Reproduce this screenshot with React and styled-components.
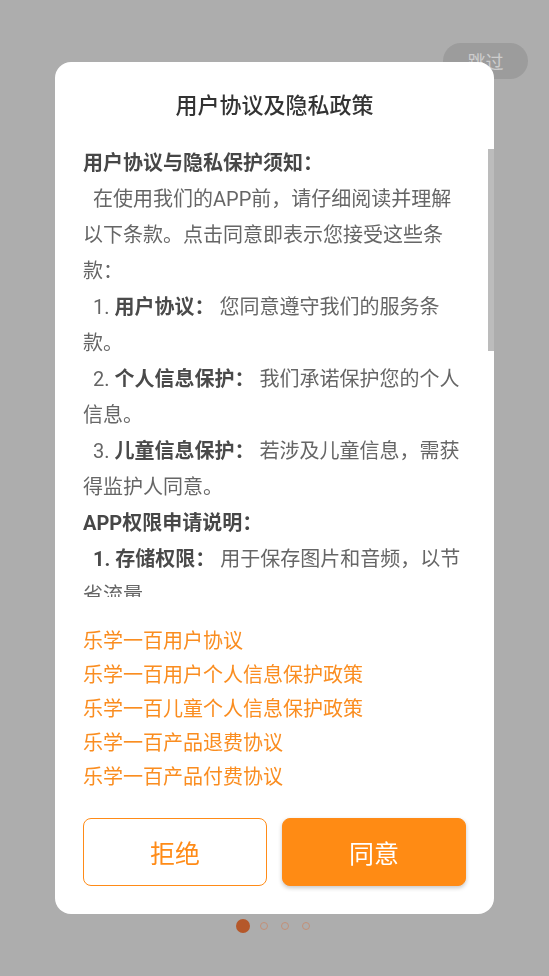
import styled, { createGlobalStyle } from "styled-components";

const GlobalStyle = createGlobalStyle`
	* {
		box-sizing: border-box;
	}

	body {
		margin: 0;
		font-family: Roboto, "Noto Sans CJK SC", sans-serif;
		background-color: #adadad;
	}
`;

const Page = styled.div`
	display: flex;
	flex-direction: column;
	min-height: 100vh;
	background-color: #adadad;
`;

const TopBar = styled.div`
	display: flex;
	justify-content: flex-end;
	padding: 43px 21px 0;
`;

const SkipButton = styled.button`
	width: 85px;
	height: 36px;
	border: none;
	border-radius: 18px;
	background-color: #9c9c9c;
	color: #cdcdcd;
	font-family: inherit;
	font-size: 18px;
`;

const Spacer = styled.div`
	flex: 1;
`;

const Dots = styled.div`
	display: flex;
	justify-content: center;
	gap: 7px;
	padding-bottom: 43px;
`;

const DotSlot = styled.span`
	display: flex;
	align-items: center;
	justify-content: center;
	width: 14px;
	height: 14px;
`;

const Dot = styled.span`
	display: block;
	border-radius: 50%;
	width: ${(props) => (props.$active ? "14px" : "8px")};
	height: ${(props) => (props.$active ? "14px" : "8px")};
	background-color: ${(props) => (props.$active ? "#b5582a" : "transparent")};
	border: ${(props) => (props.$active ? "none" : "1px solid #c39078")};
`;

const Overlay = styled.div`
	position: fixed;
	inset: 0;
	display: flex;
	align-items: center;
	justify-content: center;
`;

const Card = styled.div`
	display: flex;
	flex-direction: column;
	width: 439px;
	border-radius: 16px;
	background-color: #ffffff;
	padding-bottom: 28px;
	overflow: hidden;
`;

const Title = styled.h2`
	margin: 0;
	padding-top: 28px;
	text-align: center;
	font-size: 22px;
	line-height: 32px;
	font-weight: 500;
	color: #333333;
`;

const ScrollWrap = styled.div`
	position: relative;
	margin-top: 23px;
`;

const ScrollBody = styled.div`
	height: 452px;
	overflow-y: auto;
	padding: 0 28px;
	scrollbar-width: none;

	&::-webkit-scrollbar {
		display: none;
	}
`;

const Thumb = styled.span`
	position: absolute;
	top: 4px;
	right: 0;
	width: 6px;
	height: 202px;
	background-color: #bcbcbc;
`;

const Heading = styled.p`
	margin: 0;
	font-size: 20px;
	line-height: 36px;
	font-weight: 700;
	color: #474747;
`;

const Para = styled.p`
	margin: 0;
	font-size: 20px;
	line-height: 36px;
	text-indent: 10px;
	color: #666666;

	& b {
		font-weight: 700;
		color: #4a4a4a;
	}
`;

const Links = styled.div`
	display: flex;
	flex-direction: column;
	margin-top: 27px;
	padding: 0 28px;
`;

const DocLink = styled.a`
	font-size: 20px;
	line-height: 34px;
	color: #fa8d20;
	text-decoration: none;
`;

const ButtonRow = styled.div`
	display: grid;
	grid-template-columns: 1fr 1fr;
	gap: 15px;
	margin-top: 24px;
	padding: 0 28px;
`;

const ActionButton = styled.button`
	height: 68px;
	border-radius: 8px;
	font-family: inherit;
	font-size: 25px;
	border: 1.5px solid #ff8b17;
	background-color: ${(props) => (props.$primary ? "#ff8b14" : "#ffffff")};
	color: ${(props) => (props.$primary ? "#ffffff" : "#ff8b17")};
	box-shadow: ${(props) => (props.$primary ? "0 2px 4px rgba(0, 0, 0, 0.22)" : "none")};
`;

const docs = [
	"乐学一百用户协议",
	"乐学一百用户个人信息保护政策",
	"乐学一百儿童个人信息保护政策",
	"乐学一百产品退费协议",
	"乐学一百产品付费协议",
];

function App() {
	return (
		<>
			<GlobalStyle />
			<Page>
				<TopBar>
					<SkipButton>跳过</SkipButton>
				</TopBar>
				<Spacer />
				<Dots>
					{[0, 1, 2, 3].map((i) => (
						<DotSlot key={i}>
							<Dot $active={i === 0} />
						</DotSlot>
					))}
				</Dots>
			</Page>

			<Overlay>
				<Card>
					<Title>用户协议及隐私政策</Title>

					<ScrollWrap>
						<ScrollBody>
							<Heading>用户协议与隐私保护须知：</Heading>
							<Para>在使用我们的APP前，请仔细阅读并理解以下条款。点击同意即表示您接受这些条款：</Para>
							<Para>
								1. <b>用户协议：</b> 您同意遵守我们的服务条款。
							</Para>
							<Para>
								2. <b>个人信息保护：</b> 我们承诺保护您的个人信息。
							</Para>
							<Para>
								3. <b>儿童信息保护：</b> 若涉及儿童信息，需获得监护人同意。
							</Para>
							<Heading>APP权限申请说明：</Heading>
							<Para>
								<b>1. 存储权限：</b> 用于保存图片和音频，以节省流量。
							</Para>
							<Para>
								<b>2. 网络权限：</b> 用于加载课程内容和同步学习记录。
							</Para>
							<Para>
								<b>3. 麦克风权限：</b> 用于录制跟读音频，完成口语练习。
							</Para>
						</ScrollBody>
						<Thumb />
					</ScrollWrap>

					<Links>
						{docs.map((doc) => (
							<DocLink key={doc} href="#">
								{doc}
							</DocLink>
						))}
					</Links>

					<ButtonRow>
						<ActionButton>拒绝</ActionButton>
						<ActionButton $primary>同意</ActionButton>
					</ButtonRow>
				</Card>
			</Overlay>
		</>
	);
}

export default App;
